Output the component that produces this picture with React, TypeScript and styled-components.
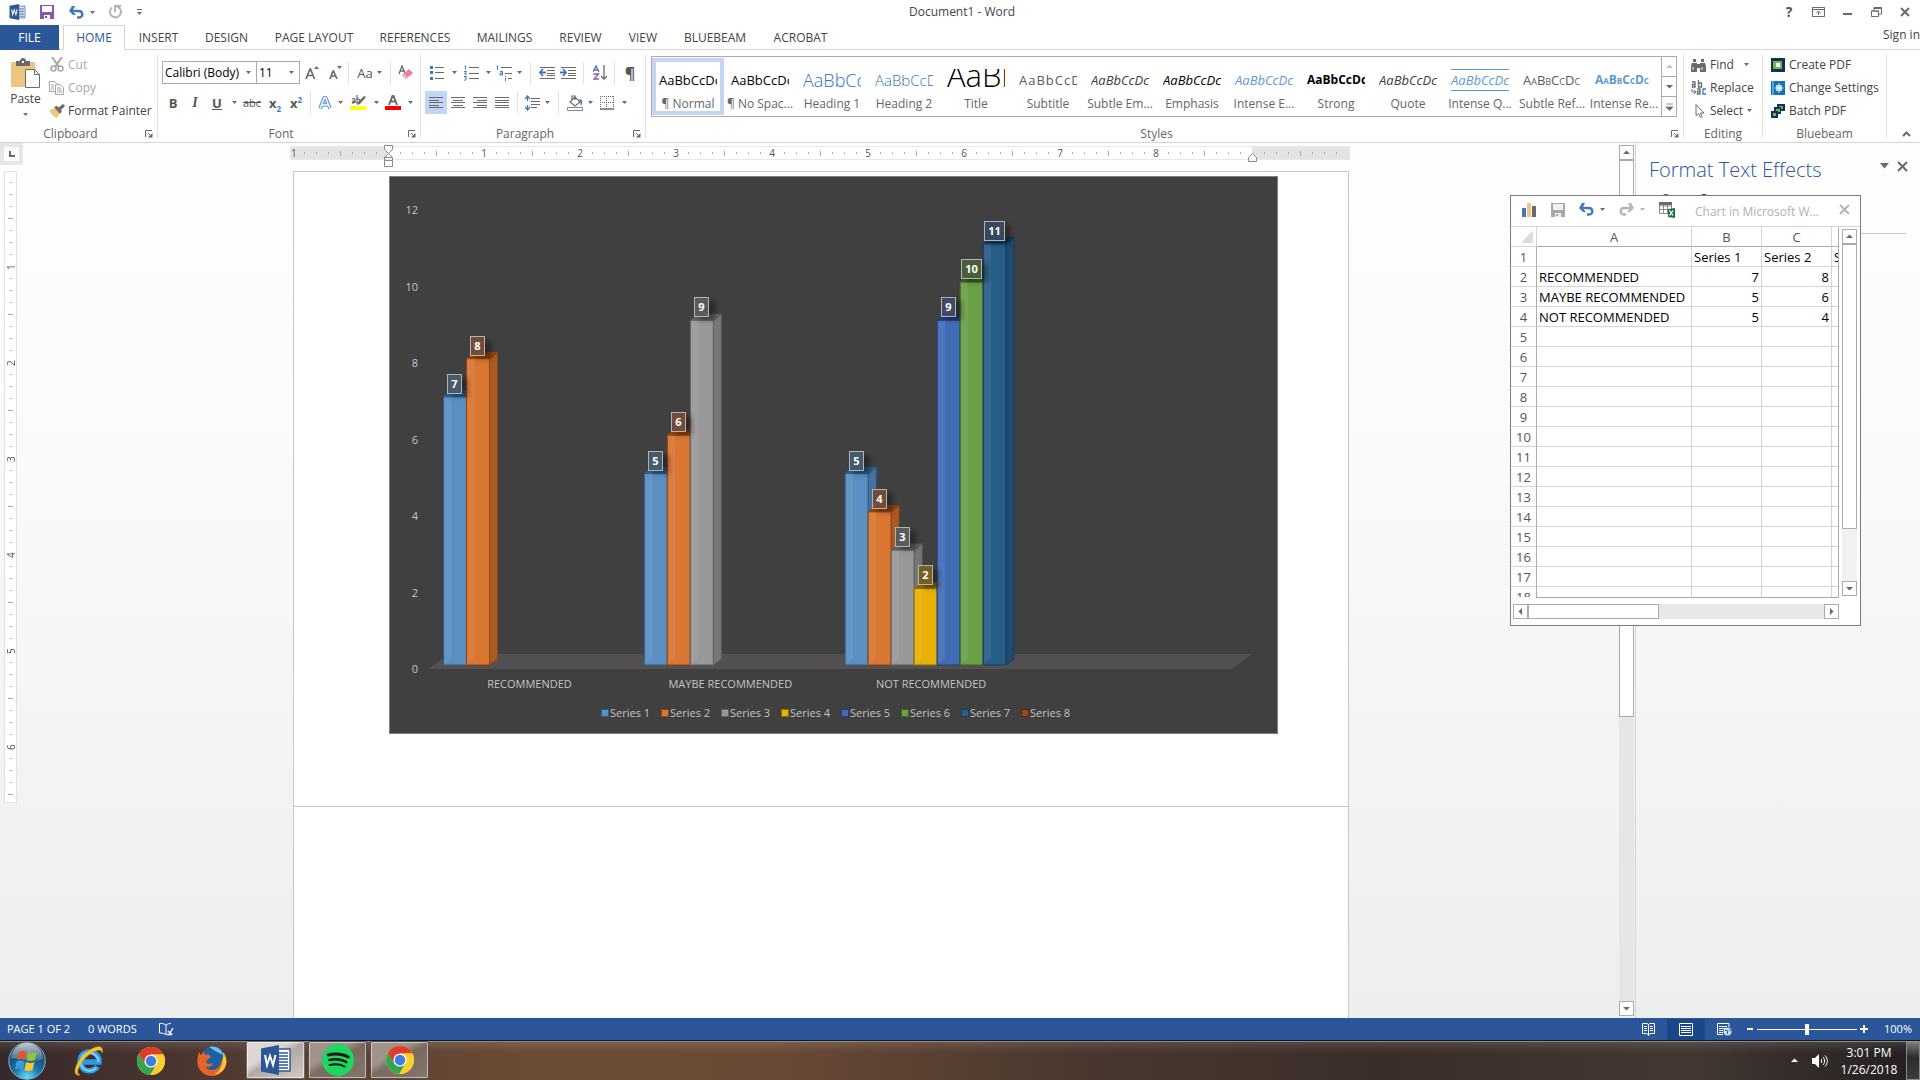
import React from "react";
import styled, { createGlobalStyle, css } from "styled-components";
import { SiSpotify } from "react-icons/si";

const ui = '"Open Sans", "Noto Sans", sans-serif';
const blue = "#2b579a";
const line = "#d4d4d4";
const ink = "#444444";

const GlobalStyle = createGlobalStyle`
  * { box-sizing: border-box; }
  html, body { margin: 0; height: 100%; overflow: hidden; background: #fff; }
  #root { height: 100%; }
  body, button, input, select { font-family: ${ui}; font-size: 12px; color: ${ink}; }
  button { margin: 0; padding: 0; border: 0; background: none; }
  svg { display: block; flex: none; }
`;

const Screen = styled.div`
  display: flex;
  flex-direction: column;
  height: 100vh;
`;

/* ---------- Title bar ---------- */

const TitleBar = styled.header`
  display: grid;
  grid-template-columns: 1fr auto 1fr;
  align-items: center;
  height: 25px;
  padding: 0 5px 1px 9px;
`;
const QuickAccess = styled.div`
  display: flex;
  align-items: center;
`;
const QuickButton = styled.button<{ $w: number }>`
  display: flex;
  align-items: center;
  width: ${(p) => p.$w}px;
  height: 20px;
`;
const WindowTitle = styled.h1`
  margin: 0;
  font-size: 12px;
  line-height: 16px;
  font-weight: 400;
`;
const WindowButtons = styled.div`
  display: flex;
  justify-content: flex-end;
  gap: 9px;
`;
const WindowButton = styled.button`
  display: grid;
  place-items: center;
  width: 20px;
  height: 20px;
`;

/* ---------- Tabs ---------- */

const TabRow = styled.nav`
  display: flex;
  height: 25px;
  border-bottom: 1px solid ${line};
`;
const Tab = styled.button<{ $w: number; $kind?: "file" | "active" }>`
  width: ${(p) => p.$w}px;
  height: 25px;
  font-size: 12px;
  line-height: 24px;
  white-space: nowrap;
  ${(p) =>
    p.$kind === "file" &&
    css`
      background: ${blue};
      color: #fff;
      margin-right: 4px;
    `}
  ${(p) =>
    p.$kind === "active" &&
    css`
      background: #fff;
      color: ${blue};
      border: 1px solid ${line};
      border-bottom: 0;
    `}
`;
const SignIn = styled.a`
  margin-left: auto;
  line-height: 20px;
  color: ${ink};
  text-decoration: none;
`;

/* ---------- Ribbon ---------- */

const Ribbon = styled.section`
  display: flex;
  height: 93px;
  border-bottom: 1px solid ${line};
`;
const Divider = styled.div`
  width: 1px;
  margin: 4px 0;
  background: #e1e1e1;
`;
const Group = styled.div<{ $w?: number }>`
  display: flex;
  flex-direction: column;
  ${(p) => (p.$w ? `width: ${p.$w}px;` : "flex: 1; min-width: 0;")}
`;
const GroupBody = styled.div`
  flex: 1;
  min-height: 0;
`;
const GroupFooter = styled.div<{ $launch: boolean }>`
  display: grid;
  grid-template-columns: ${(p) => (p.$launch ? "1fr 16px" : "1fr")};
  align-items: center;
  height: 16px;
  color: #666;
  text-align: center;
  line-height: 16px;
`;
const Launch = styled.button`
  display: grid;
  place-items: center;
`;
const Tools = styled.div`
  display: flex;
  flex-direction: column;
  gap: 7px;
  padding: 11px 0 0 4px;
`;
const ToolRow = styled.div`
  display: flex;
  align-items: center;
  height: 23px;
`;
const Tool = styled.button<{ $w: number; $on?: boolean }>`
  display: flex;
  align-items: center;
  justify-content: center;
  gap: 4px;
  width: ${(p) => p.$w}px;
  height: 23px;
  background: ${(p) => (p.$on ? "#c2d5f2" : "none")};
`;
const ToolSep = styled.i<{ $w: number }>`
  width: ${(p) => p.$w}px;
  height: 22px;
  background: linear-gradient(#e1e1e1, #e1e1e1) center / 1px 100% no-repeat;
`;
const Glyph = styled.span<{ $bold?: boolean; $italic?: boolean; $deco?: string; $size?: number }>`
  font-size: ${(p) => p.$size ?? 13}px;
  line-height: 16px;
  font-weight: ${(p) => (p.$bold ? 700 : 400)};
  font-style: ${(p) => (p.$italic ? "italic" : "normal")};
  font-family: ${(p) => (p.$italic ? '"Liberation Serif", serif' : ui)};
  text-decoration: ${(p) => p.$deco ?? "none"};
  color: #555;
  sub, sup {
    font-size: 8px;
    line-height: 0;
    color: #3f7ab8;
  }
`;
const ComboWrap = styled.label<{ $w: number }>`
  position: relative;
  width: ${(p) => p.$w}px;
  height: 23px;
  border: 1px solid #ababab;
  & + & {
    border-left: 0;
  }
`;
const Combo = styled.select`
  appearance: none;
  display: block;
  width: 100%;
  height: 21px;
  padding: 0 12px 0 2px;
  border: 0;
  border-radius: 0;
  background: #fff;
  color: #000;
`;
const ComboArrow = styled.span`
  position: absolute;
  right: 5px;
  top: 9px;
  pointer-events: none;
`;

const ClipboardBody = styled.div`
  display: flex;
  padding-top: 3px;
`;
const PasteButton = styled.button`
  display: flex;
  flex-direction: column;
  align-items: center;
  width: 49px;
  padding: 5px 0 0 2px;
  line-height: 20px;
`;
const PasteCaret = styled.span`
  padding-top: 4px;
`;
const StackedButtons = styled.div`
  display: flex;
  flex-direction: column;
`;
const LabelButton = styled.button<{ $off?: boolean }>`
  display: flex;
  align-items: center;
  gap: 4px;
  height: 23px;
  white-space: nowrap;
  color: ${(p) => (p.$off ? "#a6a6a6" : ink)};
`;
const Indented = styled.div`
  padding: 3px 0 0 7px;
`;
const IconCell = styled.span`
  display: grid;
  place-items: center;
  width: 15px;
`;

const Gallery = styled.div`
  display: flex;
  height: 61px;
  margin: 6px 6px 0 5px;
  border: 1px solid #ababab;
`;
const GalleryItems = styled.div`
  display: flex;
  flex: 1;
  min-width: 0;
  overflow: hidden;
`;
const StyleCard = styled.button<{ $on?: boolean }>`
  flex: 0 0 72px;
  height: 57px;
  margin-top: 1px;
  padding-top: 4px;
  box-shadow: ${(p) => (p.$on ? "inset 0 0 0 4px #c2d5f2" : "none")};
`;
const Preview = styled.span<{ $look: string }>`
  display: block;
  width: 58px;
  height: 26px;
  margin: 3px 7px 0;
  overflow: hidden;
  white-space: nowrap;
  text-align: left;
  font-size: 13px;
  line-height: 22px;
  color: #000;
  ${(p) => p.$look}
`;
const StyleName = styled.span`
  display: block;
  padding-top: 1px;
  line-height: 16px;
  color: #666;
  white-space: nowrap;
`;
const GalleryScroll = styled.div`
  display: flex;
  flex-direction: column;
  width: 15px;
  border-left: 1px solid #ababab;
`;
const GalleryStep = styled.button`
  flex: 1;
  display: grid;
  place-items: center;
  & + & {
    border-top: 1px solid #ababab;
  }
`;
const Collapse = styled.div`
  display: flex;
  align-items: flex-end;
  justify-content: center;
  width: 33px;
  padding: 0 0 5px 5px;
`;

/* ---------- Workspace ---------- */

const Workspace = styled.main`
  position: relative;
  display: flex;
  flex: 1;
  min-height: 0;
  background: linear-gradient(#fefefe, #fbfbfb 30%, #eeeeee);
`;
const Editor = styled.div`
  display: grid;
  grid-template-columns: 23px 1fr;
  grid-template-rows: 28px 1fr;
  flex: 1;
  min-width: 0;
  overflow: hidden;
`;
const TabStop = styled.button`
  display: grid;
  place-items: center;
  width: 23px;
  height: 22px;
  background: #fbfbfb;
  border: 4px solid #e6e6e6;
`;
const RulerTrack = styled.div`
  justify-self: center;
  position: relative;
  width: 1058px;
  height: 12px;
  margin: 4px 2px 0 0;
  background: linear-gradient(90deg, #e4e4e4 97px, #fff 97px, #fff 961px, #e4e4e4 961px);
  box-shadow: 0 0 0 1px #e8e8e8;
`;
const RulerScale = styled.div`
  display: flex;
  height: 12px;
  overflow: hidden;
`;
const RulerSlot = styled.span<{ $kind: string }>`
  flex: 0 0 12px;
  display: grid;
  place-items: center;
  font-size: 10px;
  line-height: 12px;
  color: #555;
  &:first-child {
    flex-basis: 7px;
    justify-items: start;
  }
  &::before {
    content: "";
    display: ${(p) => (p.$kind === "label" ? "none" : "block")};
    width: 1px;
    height: ${(p) => (p.$kind === "half" ? 5 : 2)}px;
    background: #aaa;
  }
`;
const Marker = styled.span<{ $x: number }>`
  position: absolute;
  left: ${(p) => p.$x}px;
  top: -2px;
`;
const SideRuler = styled.div`
  width: 13px;
  height: 632px;
  margin: 0 0 0 4px;
  padding-top: 5px;
  background: #fff;
  border: 1px solid #e1e1e1;
`;
const SideSlot = styled.span<{ $kind: string }>`
  display: grid;
  place-items: center;
  width: 12px;
  height: 12px;
  writing-mode: vertical-rl;
  transform: rotate(180deg);
  font-size: 10px;
  line-height: 10px;
  color: #555;
  &::before {
    content: "";
    display: ${(p) => (p.$kind === "label" ? "none" : "block")};
    width: ${(p) => (p.$kind === "half" ? 5 : 2)}px;
    height: 1px;
    background: #aaa;
  }
`;
const Pages = styled.div`
  justify-self: center;
  display: flex;
  flex-direction: column;
  width: 1056px;
  min-height: 0;
`;
const Sheet = styled.article<{ $fill?: boolean }>`
  background: #fff;
  border: 1px solid #c6c6c6;
  border-bottom: 0;
  padding: 4px 0 0 95px;
  ${(p) => (p.$fill ? "flex: 1;" : "padding-bottom: 72px;")}
`;

const ScrollColumn = styled.div<{ $bg?: string }>`
  display: flex;
  flex-direction: column;
  width: 15px;
  background: ${(p) => p.$bg ?? "#e6e6e6"};
`;
const ScrollRow = styled.div`
  display: flex;
  height: 15px;
  background: #e8e8e8;
`;
const ScrollButton = styled.button`
  display: grid;
  place-items: center;
  flex: 0 0 15px;
  width: 15px;
  height: 15px;
  background: #fff;
  border: 1px solid #ababab;
`;
const ScrollThumb = styled.div<{ $len: string }>`
  flex: 0 0 ${(p) => p.$len};
  background: #fff;
  border: 1px solid #ababab;
`;
const Spring = styled.div`
  flex: 1;
`;
const DocScroll = styled.div`
  display: flex;
  margin: 2px 1px 2px 0;
`;
const Pane = styled.aside`
  width: 285px;
  padding: 10px 12px 0 13px;
  border-left: 1px solid ${line};
`;
const PaneHead = styled.div`
  display: flex;
  align-items: center;
  height: 34px;
`;
const PaneTitle = styled.h2`
  flex: 1;
  margin: 0;
  font-size: 20px;
  line-height: 28px;
  font-weight: 300;
  color: ${blue};
`;
const PaneTabs = styled.div`
  height: 47px;
  display: flex;
  gap: 22px;
  padding: 7px 0 0 10px;
  margin-right: 2px;
  border-bottom: 1px solid #c6c6c6;
`;
const PaneTools = styled.div`
  display: flex;
  align-items: center;
  gap: 7px;
  padding-bottom: 8px;
`;

/* ---------- Data window ---------- */

const DataWindow = styled.section`
  position: absolute;
  right: 59px;
  top: 52px;
  width: 351px;
  background: #fff;
  border: 1px solid #7b7b7b;
`;
const DataBar = styled.div`
  display: flex;
  align-items: center;
  height: 31px;
  padding: 0 10px 3px 11px;
  border-bottom: 1px solid ${line};
`;
const DataTitle = styled.h3`
  flex: 1;
  margin: 0;
  padding: 4px 0 0 20px;
  font-size: 12px;
  font-weight: 400;
  color: #b1b1b1;
  white-space: nowrap;
`;
const DataMain = styled.div`
  display: flex;
  gap: 3px;
  height: 371px;
`;
const GridClip = styled.div`
  width: 328px;
  overflow: hidden;
  background: linear-gradient(#ababab, #ababab) 25px 100% / 303px 1px no-repeat;
  padding-bottom: 1px;
`;
const GridView = styled.div`
  height: 370px;
  overflow: hidden;
  border-right: 1px solid #ababab;
`;
const GridTable = styled.table`
  width: 397px;
  table-layout: fixed;
  border-collapse: separate;
  border-spacing: 0;
  color: #000;
  font-size: 13px;
  line-height: 18px;
  th, td {
    height: 20px;
    padding: 1px 2px 0;
    font-weight: 400;
    border-right: 1px solid ${line};
    border-bottom: 1px solid ${line};
    white-space: nowrap;
  }
  th {
    color: #555;
    text-align: center;
  }
  thead th {
    border-bottom-color: #ababab;
  }
  thead th:first-child {
    border-bottom-color: ${line};
  }
  tbody th {
    border-right-color: #ababab;
  }
`;
const Cell = styled.td<{ $num?: boolean }>`
  text-align: ${(p) => (p.$num ? "right" : "left")};
`;
const Corner = styled.i`
  display: block;
  width: 12px;
  height: 12px;
  margin-left: 8px;
  background: linear-gradient(135deg, transparent 50%, #dcdcdc 50%);
`;
const DataSide = styled.div`
  display: flex;
  padding: 2px 0 2px;
`;
const DataFoot = styled.div`
  width: 326px;
  margin: 6px 0 6px 2px;
`;

/* ---------- Status bar ---------- */

const StatusBar = styled.footer`
  display: flex;
  align-items: center;
  height: 22px;
  padding: 0 8px 0 7px;
  background: ${blue};
  color: #fff;
  font-size: 11px;
  line-height: 20px;
`;
const StatusText = styled.span<{ $w: number }>`
  width: ${(p) => p.$w}px;
`;
const ViewButton = styled.button<{ $on?: boolean }>`
  display: grid;
  place-items: center;
  width: 38px;
  height: 21px;
  background: ${(p) => (p.$on ? "#19478a" : "none")};
`;
const ZoomButton = styled.button`
  display: grid;
  place-items: center;
  width: 14px;
  height: 20px;
`;
const ZoomRange = styled.input`
  appearance: none;
  width: 100px;
  height: 11px;
  margin: 0;
  background: linear-gradient(#fff, #fff) center / 100% 1px no-repeat;
  &::-webkit-slider-thumb {
    appearance: none;
    width: 4px;
    height: 11px;
    background: #fff;
  }
`;
const ZoomValue = styled.output`
  width: 41px;
  text-align: right;
`;

/* ---------- Taskbar ---------- */

const Taskbar = styled.nav`
  display: flex;
  align-items: stretch;
  height: 40px;
  border-top: 1px solid #17181c;
  box-shadow: inset 0 1px 0 #8d8a88;
  background:
    linear-gradient(rgba(255, 255, 255, 0.12), rgba(255, 255, 255, 0) 30%),
    linear-gradient(90deg, #35292a, #553c32 14%, #6b4c35 28%, #6a4a36 40%, #4a382f 56%, #3b2e2a 72%, #433833 88%, #231f20);
`;
const Launcher = styled.button<{ $w: number }>`
  display: grid;
  place-items: center;
  width: ${(p) => p.$w}px;
`;
const TaskButton = styled.button<{ $on?: boolean }>`
  display: grid;
  place-items: center;
  width: 59px;
  height: 38px;
  margin-right: 3px;
  border: 1px solid ${(p) => (p.$on ? "#f2eeec" : "#b4a8a0")};
  border-radius: 2px;
  outline: 1px solid rgba(0, 0, 0, 0.55);
  outline-offset: -1px;
  box-shadow: inset 0 0 0 1px rgba(255, 255, 255, 0.5);
  background: ${(p) =>
    p.$on
      ? "linear-gradient(150deg, #dcd7d4 36%, #b3a8a2 50%, #d2cbc7)"
      : "linear-gradient(150deg, #a09389 36%, #7a6a5f 50%, #85756a)"};
`;
const SpotifyDisc = styled.span`
  border-radius: 50%;
  background: radial-gradient(#14171a 60%, transparent 61%);
`;
const Tray = styled.div`
  display: flex;
  align-items: center;
  margin-left: auto;
`;
const TrayButton = styled.button`
  display: grid;
  place-items: center;
  width: 25px;
  height: 30px;
`;
const Clock = styled.time`
  width: 74px;
  text-align: center;
  color: #fff;
  font-size: 12px;
  line-height: 17px;
`;
const ShowDesktop = styled.button`
  align-self: stretch;
  width: 14px;
  margin-top: 1px;
  border: 1px solid #8b8988;
  background: linear-gradient(#777, #2b2b2b 40%, #3b3b3b);
`;

/* ---------- Icons ---------- */

const g = "#6a6a6a";
const b = "#3f7ab8";

const Icon = ({ w = 16, h = 16, children }: { w?: number; h?: number; children: React.ReactNode }) => (
  <svg width={w} height={h} viewBox={`0 0 ${w} ${h}`} fill="none" aria-hidden="true">
    {children}
  </svg>
);
const Tri = ({ dir = "down", color = g }: { dir?: "up" | "down" | "left" | "right"; color?: string }) => {
  const d = { down: "M0 2h7L3.5 5.5z", up: "M0 5h7L3.5 1.5z", left: "M5 0v7L1.5 3.5z", right: "M2 0v7l3.5-3.5z" }[dir];
  return <Icon w={7} h={7}><path d={d} fill={color} /></Icon>;
};
const Small = ({ color = g }: { color?: string }) => <Icon w={5} h={3}><path d="M0 0h5L2.5 3z" fill={color} /></Icon>;
const WordMark = ({ w, h }: { w: number; h: number }) => (
  <svg width={w} height={h} viewBox="0 0 30 30" aria-hidden="true">
    <path d="M16 4h13v22H16z" fill="#fff" stroke={blue} strokeWidth="1.4" />
    <path d="M18 8h9M18 11h9M18 14h9M18 17h9M18 20h9M18 23h9" stroke={blue} strokeWidth="1.3" />
    <path d="M0 3.500L18 0v30L0 26.500z" fill={blue} />
    <path d="M4 10l2 10 3-9 3 9 2.500-10" fill="none" stroke="#fff" strokeWidth="2" />
  </svg>
);
const Floppy = ({ color, bg = "#fff" }: { color: string; bg?: string }) => (
  <Icon w={14} h={14}><path d="M0 0h14v14H0z" fill={color} /><path d="M2 1h10v6H2zM4 10h6v4H4z" fill={bg} /><path d="M5 11h2v2H5z" fill={color} /></Icon>
);
const Undo = () => (
  <Icon w={15} h={13}><path d="M2 5h7.500c5 0 5 6.500.5 6.500H8" stroke={b} strokeWidth="2.400" /><path d="M6 0H3L0 5l4 4h3L3.500 5z" fill={b} /></Icon>
);
const RedoArc = () => (
  <Icon w={14} h={14}><path d="M4 2.500A5.500 5.500 0 1 0 9 1.500" stroke="#b5b5b5" strokeWidth="2" /><path d="M13 1H7v6" stroke="#b5b5b5" strokeWidth="2" /></Icon>
);
const RedoArrow = () => (
  <Icon w={15} h={13}><path d="M13 5H5.500c-5 0-5 6.500-.5 6.500h2" stroke="#b5b5b5" strokeWidth="2.400" /><path d="M9 0h3l3 5-4 4H8l3.500-4z" fill="#b5b5b5" /></Icon>
);
const Cross = ({ size = 10, color = g }: { size?: number; color?: string }) => (
  <Icon w={size} h={size}><path d={`M1 1l${size - 2} ${size - 2}M${size - 1} 1L1 ${size - 1}`} stroke={color} strokeWidth="2" /></Icon>
);
const PasteIcon = () => (
  <Icon w={29} h={31}>
    <path d="M0 4h24v25H0z" fill="#ecc57e" /><path d="M5 3h4c0-4 6-4 6 0h4v5H5z" fill={g} /><path d="M11 3h2v2h-2z" fill="#fff" />
    <path d="M14.500 11.500h9l5 5v13h-14z" fill="#fff" stroke={g} /><path d="M23.500 11.500v5h5" stroke={g} />
  </Icon>
);
const CutIcon = () => (
  <Icon w={14} h={15}><path d="M2 0l7 10M12 0L5 10" stroke="#a6a6a6" strokeWidth="2" /><circle cx="3.500" cy="11.500" r="2.500" stroke="#a6a6a6" strokeWidth="1.500" /><circle cx="10.500" cy="11.500" r="2.500" stroke="#a6a6a6" strokeWidth="1.500" /></Icon>
);
const CopyIcon = () => (
  <Icon w={15} h={14}><path d="M.5.5h5l2 2v8h-7z" stroke="#a6a6a6" /><path d="M2 4h3M2 6h3M2 8h3" stroke="#a6a6a6" /><path d="M6.500 3.500h5l3 3v7h-8z" fill="#fff" stroke="#a6a6a6" /><path d="M8 7h4M8 9h5M8 11h5" stroke="#a6a6a6" /></Icon>
);
const BrushIcon = () => (
  <Icon w={16} h={14}><path d="M0 6l6-2 5 5-3 5c-3-1-6-4-8-8z" fill="#ecc57e" /><path d="M5 3l3-1 5 5-2 3z" fill={g} /><path d="M9 4l5-4 2 2-4 4z" fill={g} /></Icon>
);
const LaunchIcon = () => <Icon w={8} h={8}><path d="M.5 7V.500H7M3 3l3 3" stroke={g} /><path d="M7.500 3v4.500H3z" fill={g} /></Icon>;
const EraserIcon = () => (
  <Icon w={16} h={15}><path d="M1 9L4 1l3 7M2 6h4" stroke={g} strokeWidth="1.300" /><path d="M4 10l7-6 4 4-7 6z" fill="#e88296" /><path d="M4 10l2-1.500 4 4L8 14z" fill="#f3b4c0" /></Icon>
);
const TextFx = () => (
  <Icon w={14} h={14}><path d="M2 12.500L6.500 1.500h1L12 12.500M4 9h6" stroke="#5b93cf" strokeWidth="3.600" strokeLinejoin="round" /><path d="M2 12.500L6.500 1.500h1L12 12.500M4 9h6" stroke="#fff" strokeWidth="1.400" /></Icon>
);
const Highlight = () => (
  <Icon w={16} h={15}><path d="M0 11h16v4H0z" fill="#ff0" /><path d="M2 4c2-1 3 0 3 1v3M5 6c-3 0-3 2-2 2l2-1M7 0v8c4 1 4-5 0-4" stroke={g} strokeWidth="1.300" /><path d="M14 1l2 1-6 7-3 1 1-3z" fill={g} /></Icon>
);
const FontColor = () => (
  <Icon w={16} h={15}><path d="M0 11h16v4H0z" fill="#f00" /><path d="M4 10l3.500-9h1l3.500 9M5.500 6.500h5" stroke={g} strokeWidth="2" /></Icon>
);
const Grow = ({ up }: { up?: boolean }) => (
  <Icon w={14} h={14}><path d={up ? "M1 13L5 3h.5L9.500 13M2.500 9.500h5.500" : "M2 13L5 5h.5L9 13M3 10h5"} stroke={g} strokeWidth="1.700" /><path d={up ? "M9 3h5L11.500 0z" : "M9 0h5L11.500 3z"} fill={b} /></Icon>
);
const Bullets = () => <Icon w={14} h={15}><path d="M5 2.500h9M5 7.500h9M5 13.500h9" stroke={g} /><path d="M0 1h3v3H0zM0 6h3v3H0zM0 12h3v3H0z" fill={b} /></Icon>;
const Numbers = () => <Icon w={15} h={16}><path d="M5 2.500h10M5 8.500h10M5 13.500h10" stroke={g} /><path d="M.5 1h1v3.500M0 6.500h2.500L.5 9H3M0 11.500h2.500L1 13c3 0 1 3-1 2" stroke={b} /></Icon>;
const Multi = () => <Icon w={16} h={16}><path d="M5 2.500h11M9 8.500h7M12 13.500h4" stroke={g} /><path d="M.5 1h1v4M4 6.500h2.500V10M6.500 8H4v2h3M9.500 11v1M9.500 13v3" stroke={b} /></Icon>;
const Indent = ({ back }: { back?: boolean }) => (
  <Icon w={16} h={13}><path d="M1 1.500h15M8 4.500h8M8 7.500h8M8 9.500h8M1 12.500h15" stroke={g} /><path d={back ? "M7 6.500H1M4 3L1 6.500 4 10" : "M0 6.500h6M3 3l3 3.500L3 10"} stroke={b} strokeWidth="1.800" /></Icon>
);
const SortIcon = () => <Icon w={14} h={15}><path d="M0 7l3-6 3 6M1.500 5h3" stroke={b} strokeWidth="1.300" /><path d="M.5 9h5L1 14h5" stroke="#8a5ab0" strokeWidth="1.300" /><path d="M11 0v14M8 11l3 3 3-3" stroke={g} strokeWidth="1.300" /></Icon>;
const AlignIcon = ({ kind }: { kind: "l" | "c" | "r" | "j" }) => {
  const rows = kind === "j" ? [14, 14, 14, 14, 14] : [14, 10, 14, 10, 14];
  return (
    <Icon w={14} h={13}>
      {rows.map((n, i) => {
        const x = kind === "c" ? (14 - n) / 2 : kind === "r" ? 14 - n : 0;
        return <path key={i} d={`M${x} ${Math.round(i * 2.6) + 1.5}h${n}`} stroke={g} />;
      })}
    </Icon>
  );
};
const Spacing = () => <Icon w={15} h={16}><path d="M6 3.500h9M6 6.500h9M6 9.500h9M6 12.500h6" stroke={g} /><path d="M2.500 1v5M2.500 10v5M0 4l2.500-3L5 4M0 12l2.500 3L5 12" stroke={b} strokeWidth="1.300" /></Icon>;
const Bucket = () => <Icon w={16} h={16}><path d="M.5 12.500h15v3H.5z" stroke="#8a8a8a" /><path d="M3 7l5-5 5 5-5 4zM5 5V1h3v4" stroke={g} strokeWidth="1.200" /><path d="M12 4c4 0 4 3 2 7-1-3 0-4-2-7z" fill={b} /></Icon>;
const Borders = () => <Icon w={14} h={14}><path d="M.5 0v13M6.500 0v13M13.500 0v13M0 .5h14M0 6.500h14" stroke={g} strokeDasharray="1 1" /><path d="M0 13h14" stroke={g} strokeWidth="1.500" /></Icon>;
const Binoculars = () => <Icon w={15} h={14}><path d="M1 5h5v9H0V8zM9 5h5l1 3v6H9zM6 6h3v4H6zM2 1h3v3H2zM10 1h3v3h-3z" fill={g} /><path d="M2 9v3M11 9v3" stroke="#fff" /></Icon>;
const ReplaceIcon = () => <Icon w={16} h={15}><path d="M1 2h3v5H1.500V4.500H4M7.500 0v7h3V3h-3" stroke={g} strokeWidth="1.300" /><path d="M1 9v3h3M3 10l2 2-2 2" stroke={b} /><path d="M6 9h3v5H6.500v-2.500H9" stroke={g} strokeWidth="1.300" /><path d="M15 9h-3v5h3" stroke={b} strokeWidth="1.300" /></Icon>;
const Pointer = () => <Icon w={12} h={14}><path d="M3 .5v11l2.500-2 2 4 1.500-1-1.500-3.500H11z" stroke={g} /></Icon>;
const CreatePdf = () => <Icon w={14} h={14}><path d="M0 0h14v14H0z" fill="#0f3263" /><path d="M2 3h9v8H2z" fill="#72b741" /><path d="M5 5h4v4H5z" fill="#fff" /></Icon>;
const SettingsPdf = () => <Icon w={14} h={14}><path d="M0 0h14v14H0z" fill="#1273b8" /><path d="M2 0v14" stroke="#9fd0f2" /><circle cx="8" cy="7" r="3" fill="#d7ecfa" /><path d="M8 2v10M3.500 7h9M5 4l6 6M11 4l-6 6" stroke="#d7ecfa" /></Icon>;
const BatchPdf = () => <Icon w={14} h={14}><path d="M6 0h8v7H6z" fill="#0f3263" /><path d="M8 2h4v3H8z" fill="#72b741" /><path d="M3 3h7v7H3z" fill="#0f3263" /><path d="M5 5h4v3H5z" fill="#72b741" /><path d="M0 7h7v7H0z" fill="#0f3263" /><path d="M2 9h3v3H2z" fill="#72b741" /></Icon>;
const Hourglass = () => <Icon w={9} h={22}><path d="M.5.500h8v4l-4 4-4-4zM.500 12.500l4-4 4 4zM.500 12.500h8M.500 15.500h8v6h-8zM.500 12.500v3M8.500 12.500v3" fill="#fff" stroke="#8a8a8a" /></Icon>;
const RightMark = () => <Icon w={9} h={17}><path d="M.5 16.500v-4l4-4 4 4v4z" fill="#fff" stroke="#8a8a8a" /></Icon>;
const Columns = () => <Icon w={15} h={14}><path d="M0 5h4v9H0z" fill={b} /><path d="M5 0h4v14H5z" fill="#ecc57e" /><path d="M10 3h4v11h-4z" fill={g} /></Icon>;
const GridX = () => <Icon w={17} h={16}><path d="M.5.500h12v11H.500zM.5 4h12M.5 7.500h12M4.500 0v12M8.500 0v12" stroke="#8a8a8a" /><path d="M0 0h13v3H0z" fill={g} /><path d="M9 7l7-1v10l-7-1z" fill="#1e7145" /><path d="M10.500 8.500l3.500 5M14 8.500l-3.500 5" stroke="#fff" strokeWidth="1.300" /></Icon>;
const Proof = () => <Icon w={15} h={13}><path d="M7 12C5 10 3 10 .5 10V.500C3 .500 5 .500 7 2c1-1 3-1.500 5-1.500M7 2v10" stroke="#fff" /><path d="M9 8l2 2 3-5M12.500 10v1.500H8" stroke="#fff" strokeWidth="1.300" /></Icon>;
const BookView = () => <Icon w={13} h={13}><path d="M.5.500H5l1.500 1L8 .500h4.500v10H8l-1.500 2-1.500-2H.500zM6.500 1v11M2 3.500h3M2 5.500h3M2 7.500h3M8 3.500h3M8 5.500h3M8 7.500h3" stroke="#fff" /></Icon>;
const PrintView = () => <Icon w={14} h={13}><path d="M.5.500h13v12H.500zM2 3.500h10M2 5.500h10M2 7.500h10M2 9.500h10" stroke="#fff" /></Icon>;
const WebView = () => <Icon w={15} h={13}><path d="M12 4V.500H.500v11H6M2 3.500h8M2 5.500h6M2 7.500h4M2 9.500h4" stroke="#fff" /><circle cx="10.500" cy="8.500" r="4" fill="#cfe0f5" /><path d="M8 7l3 1-1 3M12 6l2 2" stroke={blue} /></Icon>;

const StartOrb = () => (
  <svg width="38" height="38" viewBox="0 0 38 38" aria-hidden="true">
    <defs>
      <radialGradient id="orb" cx="50%" cy="95%" r="90%"><stop offset="0" stopColor="#5fe0f8" /><stop offset=".4" stopColor="#1b76ab" /><stop offset="1" stopColor="#16324d" /></radialGradient>
      <linearGradient id="gloss" x1="0" y1="0" x2="0" y2="1"><stop offset="0" stopColor="#fff" stopOpacity=".75" /><stop offset="1" stopColor="#fff" stopOpacity=".15" /></linearGradient>
    </defs>
    <circle cx="19" cy="19" r="18.200" fill="url(#orb)" stroke="#8fb4cb" />
    <path d="M3 17A16 16 0 0 1 35 17C24 22 14 14 3 17z" fill="url(#gloss)" />
    <path d="M11 10c3-2 5-1.500 7.500-.5L17 18c-2.500-1.500-5-1.500-8 0z" fill="#e8532b" />
    <path d="M20 10c3 1.500 6 1.500 9-.5l-2 8.500c-3 1.500-6 1.500-8.500 0z" fill="#8fc43e" />
    <path d="M8.500 19.500c3-1.500 5.500-1.500 8 0l-1.500 8c-2.500-1.500-5-1.500-8 0z" fill="#3d9be0" />
    <path d="M18 20c3 1.500 5.500 1.500 8.500 0l-2 8c-3 1.500-5.500 1.500-8 0z" fill="#fbc72b" />
  </svg>
);
const Explorer = () => (
  <svg width="32" height="32" viewBox="0 0 32 32" aria-hidden="true">
    <path d="M24.500 21.500A9.500 9.500 0 1 1 26 17H10" fill="none" stroke="#2d9be4" strokeWidth="5.500" />
    <path d="M23 23A9 9 0 1 1 25.500 17" fill="none" stroke="#86d4fb" strokeWidth="2" />
    <path d="M7 30C-4 32 5 12 17 5c9-5.500 14-4 12 3 0-4-5-4-12 1C7 16 1 29 7 30z" fill="#f9c62b" stroke="#e0a012" strokeWidth=".6" />
  </svg>
);
const Chrome = () => (
  <svg width="28" height="28" viewBox="0 0 28 28" aria-hidden="true">
    <circle cx="14" cy="14" r="14" fill="#fbcf2f" />
    <path d="M14 7.500h12.400A14 14 0 0 0 1.900 7L8 17z" fill="#de3b2b" />
    <path d="M1.900 7A14 14 0 0 0 13 28l6.500-10.500L14 14l-5.600 3.300z" fill="#35a44f" />
    <path d="M19.800 17L14 28A14 14 0 0 0 26.400 7.500H14z" fill="#fbcf2f" />
    <circle cx="14" cy="14" r="6.600" fill="#f1f1f1" /><circle cx="14" cy="14" r="5.200" fill="#3d7de0" />
  </svg>
);
const Firefox = () => (
  <svg width="30" height="30" viewBox="0 0 30 30" aria-hidden="true">
    <circle cx="16" cy="13" r="12.500" fill="#1d5fa5" /><path d="M12 1c7-2 13 2 14 8l-6-3z" fill="#6fc3ee" />
    <path d="M27 7c5 11-1 23-12 23C5 30-2 21 1 10l1-4 2 3 3-4 1 4c3-1 5 0 6 2l-4 3c-1 2-1 4 2 4l4-1c-1 5-7 5-9 3 4 6 13 5 16-1 2-4 3-8 4-12z" fill="#e8632a" />
    <path d="M26 6c7 9 3 21-9 23 7-4 10-13 9-23z" fill="#fbc834" />
  </svg>
);
const Speaker = () => <Icon w={16} h={14}><path d="M0 4h3l4-4v14l-4-4H0z" fill="#fff" /><path d="M9 5c1 1 1 3 0 4M11 3c2 2 2 6 0 8M13 1.500c3 3 3 8 0 11" stroke="#fff" /></Icon>;

/* ---------- Chart ---------- */

const series = [
  { face: "#5a8fc2", side: "#44749f", edge: "#2b5f91", tag: "#455a6d" },
  { face: "#d87632", side: "#a95a25", edge: "#93430e", tag: "#734c38" },
  { face: "#989898", side: "#777777", edge: "#606060", tag: "#5b5b5b" },
  { face: "#e8b00a", side: "#b08a10", edge: "#8c6a04", tag: "#74601f" },
  { face: "#426cb5", side: "#33558f", edge: "#213f78", tag: "#3e4b66" },
  { face: "#6aa046", side: "#517c35", edge: "#3b6420", tag: "#4a5e3c" },
  { face: "#275d89", side: "#204a6d", edge: "#153a5c", tag: "#37495a" },
  { face: "#9a4a17", side: "#783a13", edge: "#562808", tag: "#5b3a28" },
];
const clusters = [
  { name: "RECOMMENDED", values: [7, 8] },
  { name: "MAYBE RECOMMENDED", values: [5, 6, 9] },
  { name: "NOT RECOMMENDED", values: [5, 4, 3, 2, 9, 10, 11] },
];
const ChartSvg = styled.svg`
  width: 889px;
  height: 558px;
  font-family: ${ui};
  font-size: 11px;
  fill: #c4c4c4;
`;
const BASE = 489;
const UNIT = 38.3;
const BAR = 23;

const Bar = ({ x, value, s }: { x: number; value: number; s: (typeof series)[number] }) => {
  const top = BASE - value * UNIT;
  return (
    <g stroke={s.edge} strokeLinejoin="round">
      <path d={`M${x + BAR} ${top}l8-6V${BASE - 6}l-8 6z`} fill={s.side} />
      <path d={`M${x} ${top}l8-6h${BAR}l-8 6z`} fill={s.edge} />
      <path d={`M${x} ${top}h${BAR}V${BASE}H${x}z`} fill={s.face} />
      <path d={`M${x + 1} ${top + 1}h7v${value * UNIT - 8}l-7 6z`} fill="#fff" fillOpacity=".07" stroke="none" />
    </g>
  );
};
const Tag = ({ x, value, s }: { x: number; value: number; s: (typeof series)[number] }) => {
  const top = Math.round(BASE - value * UNIT) - 23;
  const w = value > 9 ? 20 : 14;
  const cx = Math.round(x + BAR / 2) - 1;
  return (
    <g>
      <rect x={cx - w / 2 + 5} y={top + 4} width={w + 2} height={19} fill="#000" fillOpacity=".35" filter="url(#soft)" />
      <rect x={cx - w / 2 + 0.5} y={top + 0.5} width={w} height={19} fill={s.tag} stroke="#b3b3b3" />
      <text x={cx + 0.5} y={top + 14} textAnchor="middle" fontWeight="700" fill="#fff">{value}</text>
    </g>
  );
};
const Chart = () => (
  <ChartSvg viewBox="0 0 889 558" role="img" aria-label="Clustered column chart">
    <defs>
      <filter id="soft" x="-50%" y="-50%" width="200%" height="200%"><feGaussianBlur stdDeviation="2.500" /></filter>
    </defs>
    <rect x=".5" y=".5" width="888" height="557" fill="#404040" stroke="#7f7f7f" />
    <path d="M39 493l22-15h802l-20 15z" fill="#535051" />
    {[0, 2, 4, 6, 8, 10, 12].map((v) => (
      <text key={v} x="29" y={497 - v * 38.25} textAnchor="end">{v}</text>
    ))}
    {clusters.map((c, k) => {
      const left = 54.500 + k * 200.800;
      return (
        <g key={c.name}>
          {c.values.map((v, i) => <Bar key={i} x={left + i * BAR} value={v} s={series[i]} />)}
          {c.values.map((v, i) => <Tag key={i} x={left + i * BAR} value={v} s={series[i]} />)}
          <text x={140.500 + k * 200.800} y="512" textAnchor="middle">{c.name}</text>
        </g>
      );
    })}
    {series.map((s, i) => (
      <g key={i}>
        <rect x={212.500 + i * 60} y="533.500" width="7" height="7" fill={s.face} stroke={s.edge} />
        <text x={221 + i * 60} y="541">{`Series ${i + 1}`}</text>
      </g>
    ))}
  </ChartSvg>
);

/* ---------- Data ---------- */

const tabs: [string, number][] = [
  ["INSERT", 67], ["DESIGN", 69], ["PAGE LAYOUT", 106], ["REFERENCES", 96], ["MAILINGS", 83],
  ["REVIEW", 69], ["VIEW", 56], ["BLUEBEAM", 88], ["ACROBAT", 83],
];
const styleCards: [string, string, string?][] = [
  ["¶ Normal", ""],
  ["¶ No Spac...", ""],
  ["Heading 1", "font-size:18px;font-weight:300;color:#2e74b5;", "AaBbCc"],
  ["Heading 2", "font-size:15px;font-weight:300;color:#2e74b5;", "AaBbCcD"],
  ["Title", "font-size:31px;font-weight:300;line-height:12px;", "AaBb"],
  ["Subtitle", "color:#5a5a5a;letter-spacing:1px;"],
  ["Subtle Em...", "font-style:italic;color:#404040;"],
  ["Emphasis", "font-style:italic;"],
  ["Intense E...", "font-style:italic;color:#5b9bd5;"],
  ["Strong", "font-size:12px;font-weight:700;"],
  ["Quote", "font-style:italic;color:#404040;"],
  ["Intense Q...", "font-style:italic;color:#5b9bd5;height:22px;margin-bottom:4px;box-shadow:inset 0 1px #5b9bd5,inset 0 -1px #5b9bd5;"],
  ["Subtle Ref...", "font-variant:small-caps;color:#5a5a5a;"],
  ["Intense Re...", "font-size:12px;font-variant:small-caps;font-weight:700;color:#5b9bd5;"],
];
const sheetRows: (string | number)[][] = [
  ["", "Series 1", "Series 2", "Series 3"],
  ["RECOMMENDED", 7, 8, ""],
  ["MAYBE RECOMMENDED", 5, 6, 9],
  ["NOT RECOMMENDED", 5, 4, 3],
];
const slotKind = (i: number) => (i % 8 === 0 ? "label" : i % 4 === 0 ? "half" : "dot");

const Footer = ({ label, launch = true }: { label: string; launch?: boolean }) => (
  <GroupFooter $launch={launch}>
    <span>{label}</span>
    {launch && <Launch aria-label={`${label} options`}><LaunchIcon /></Launch>}
  </GroupFooter>
);

const RibbonBar = () => (
  <Ribbon>
    <Group $w={157}>
      <GroupBody>
        <ClipboardBody>
          <PasteButton><PasteIcon />Paste<PasteCaret><Small /></PasteCaret></PasteButton>
          <StackedButtons>
            <LabelButton $off><IconCell><CutIcon /></IconCell>Cut</LabelButton>
            <LabelButton $off><IconCell><CopyIcon /></IconCell>Copy</LabelButton>
            <LabelButton><IconCell><BrushIcon /></IconCell>Format Painter</LabelButton>
          </StackedButtons>
        </ClipboardBody>
      </GroupBody>
      <Footer label="Clipboard" />
    </Group>
    <Divider />
    <Group $w={262}>
      <GroupBody>
        <Tools>
          <ToolRow>
            <ComboWrap $w={95}><Combo aria-label="Font"><option>Calibri (Body)</option></Combo><ComboArrow><Small /></ComboArrow></ComboWrap>
            <ComboWrap $w={43}><Combo aria-label="Font size"><option>11</option></Combo><ComboArrow><Small /></ComboArrow></ComboWrap>
            <Tool $w={24} aria-label="Grow font"><Grow up /></Tool>
            <Tool $w={22} aria-label="Shrink font"><Grow /></Tool>
            <ToolSep $w={5} />
            <Tool $w={37}><Glyph>Aa</Glyph><Small /></Tool>
            <ToolSep $w={5} />
            <Tool $w={26} aria-label="Clear formatting"><EraserIcon /></Tool>
          </ToolRow>
          <ToolRow>
            <Tool $w={22}><Glyph $bold>B</Glyph></Tool>
            <Tool $w={22}><Glyph $bold $italic $size={14}>I</Glyph></Tool>
            <Tool $w={22}><Glyph $bold $deco="underline">U</Glyph></Tool>
            <Tool $w={12} aria-label="Underline style"><Small /></Tool>
            <Tool $w={24}><Glyph $deco="line-through" $size={11}>abc</Glyph></Tool>
            <Tool $w={22}><Glyph $bold>x<sub>2</sub></Glyph></Tool>
            <Tool $w={20}><Glyph $bold>x<sup>2</sup></Glyph></Tool>
            <ToolSep $w={8} />
            <Tool $w={22} aria-label="Text effects"><TextFx /></Tool>
            <Tool $w={8} aria-label="More text effects"><Small /></Tool>
            <Tool $w={28} aria-label="Highlight"><Highlight /></Tool>
            <Tool $w={8} aria-label="Highlight colour"><Small /></Tool>
            <Tool $w={26} aria-label="Font colour"><FontColor /></Tool>
            <Tool $w={8} aria-label="More font colours"><Small /></Tool>
          </ToolRow>
        </Tools>
      </GroupBody>
      <Footer label="Font" />
    </Group>
    <Divider />
    <Group $w={224}>
      <GroupBody>
        <Tools>
          <ToolRow>
            <Tool $w={24} aria-label="Bullets"><Bullets /></Tool>
            <Tool $w={10} aria-label="Bullet library"><Small /></Tool>
            <Tool $w={24} aria-label="Numbering"><Numbers /></Tool>
            <Tool $w={10} aria-label="Numbering library"><Small /></Tool>
            <Tool $w={22} aria-label="Multilevel list"><Multi /></Tool>
            <Tool $w={8} aria-label="List library"><Small /></Tool>
            <ToolSep $w={14} />
            <Tool $w={20} aria-label="Decrease indent"><Indent back /></Tool>
            <Tool $w={22} aria-label="Increase indent"><Indent /></Tool>
            <ToolSep $w={8} />
            <Tool $w={25} aria-label="Sort"><SortIcon /></Tool>
            <ToolSep $w={5} />
            <Tool $w={26}><Glyph $bold $size={16}>¶</Glyph></Tool>
          </ToolRow>
          <ToolRow>
            <Tool $w={22} $on aria-label="Align left"><AlignIcon kind="l" /></Tool>
            <Tool $w={22} aria-label="Center"><AlignIcon kind="c" /></Tool>
            <Tool $w={22} aria-label="Align right"><AlignIcon kind="r" /></Tool>
            <Tool $w={22} aria-label="Justify"><AlignIcon kind="j" /></Tool>
            <ToolSep $w={9} />
            <Tool $w={21} aria-label="Line spacing"><Spacing /></Tool>
            <Tool $w={9} aria-label="Spacing options"><Small /></Tool>
            <ToolSep $w={13} />
            <Tool $w={20} aria-label="Shading"><Bucket /></Tool>
            <Tool $w={10} aria-label="Shading colours"><Small /></Tool>
            <Tool $w={24} aria-label="Borders"><Borders /></Tool>
            <Tool $w={10} aria-label="Border options"><Small /></Tool>
          </ToolRow>
        </Tools>
      </GroupBody>
      <Footer label="Paragraph" />
    </Group>
    <Divider />
    <Group>
      <GroupBody>
        <Gallery>
          <GalleryItems>
            {styleCards.map(([name, look, sample], i) => (
              <StyleCard key={name} $on={i === 0}>
                <Preview $look={look}>{sample ?? "AaBbCcDc"}</Preview>
                <StyleName>{name}</StyleName>
              </StyleCard>
            ))}
          </GalleryItems>
          <GalleryScroll>
            <GalleryStep aria-label="Previous styles"><Tri dir="up" color="#c0c0c0" /></GalleryStep>
            <GalleryStep aria-label="Next styles"><Tri /></GalleryStep>
            <GalleryStep aria-label="More styles"><Icon w={7} h={8}><path d="M0 1h7M0 4h7L3.500 7.500z" stroke={g} fill={g} strokeWidth=".7" /></Icon></GalleryStep>
          </GalleryScroll>
        </Gallery>
      </GroupBody>
      <Footer label="Styles" />
    </Group>
    <Divider />
    <Group $w={78}>
      <GroupBody>
        <Indented>
          <LabelButton><IconCell><Binoculars /></IconCell>Find&nbsp;&nbsp;<Small /></LabelButton>
          <LabelButton><IconCell><ReplaceIcon /></IconCell>Replace</LabelButton>
          <LabelButton><IconCell><Pointer /></IconCell>Select<Small /></LabelButton>
        </Indented>
      </GroupBody>
      <Footer label="Editing" launch={false} />
    </Group>
    <Divider />
    <Group $w={123}>
      <GroupBody>
        <Indented>
          <LabelButton><IconCell><CreatePdf /></IconCell>Create PDF</LabelButton>
          <LabelButton><IconCell><SettingsPdf /></IconCell>Change Settings</LabelButton>
          <LabelButton><IconCell><BatchPdf /></IconCell>Batch PDF</LabelButton>
        </Indented>
      </GroupBody>
      <Footer label="Bluebeam" launch={false} />
    </Group>
    <Divider />
    <Collapse>
      <button aria-label="Collapse the ribbon"><Icon w={9} h={6}><path d="M1 5l3.500-3.500L8 5" stroke={g} strokeWidth="2" /></Icon></button>
    </Collapse>
  </Ribbon>
);

const ChartData = () => (
  <DataWindow aria-label="Chart data">
    <DataBar>
      <QuickButton $w={29} aria-label="Chart"><Columns /></QuickButton>
      <QuickButton $w={28} aria-label="Save"><Floppy color="#a9a9a9" bg="#f2eef4" /></QuickButton>
      <QuickButton $w={21} aria-label="Undo"><Undo /></QuickButton>
      <QuickButton $w={19} aria-label="Undo list"><Small /></QuickButton>
      <QuickButton $w={21} aria-label="Redo"><RedoArrow /></QuickButton>
      <QuickButton $w={19} aria-label="Redo list"><Small color="#b5b5b5" /></QuickButton>
      <QuickButton $w={16} aria-label="Edit data in Excel"><GridX /></QuickButton>
      <DataTitle>Chart in Microsoft W...</DataTitle>
      <button aria-label="Close data window"><Cross size={11} color="#b5b5b5" /></button>
    </DataBar>
    <DataMain>
      <GridClip>
        <GridView>
          <GridTable>
            <colgroup><col style={{ width: 26 }} /><col style={{ width: 155 }} /><col style={{ width: 70 }} /><col style={{ width: 70 }} /><col /></colgroup>
            <thead>
              <tr><th><Corner /></th><th>A</th><th>B</th><th>C</th><th>D</th></tr>
            </thead>
            <tbody>
              {Array.from({ length: 18 }, (_, r) => (
                <tr key={r}>
                  <th>{r + 1}</th>
                  {[0, 1, 2, 3].map((c) => {
                    const v = sheetRows[r]?.[c] ?? "";
                    return <Cell key={c} $num={typeof v === "number"}>{v}</Cell>;
                  })}
                </tr>
              ))}
            </tbody>
          </GridTable>
        </GridView>
      </GridClip>
      <DataSide>
        <ScrollColumn $bg="#f2f2f2">
          <ScrollButton aria-label="Scroll up"><Tri dir="up" /></ScrollButton>
          <ScrollThumb $len="285px" />
          <Spring />
          <ScrollButton aria-label="Scroll down"><Tri /></ScrollButton>
        </ScrollColumn>
      </DataSide>
    </DataMain>
    <DataFoot>
      <ScrollRow>
        <ScrollButton aria-label="Scroll left"><Tri dir="left" /></ScrollButton>
        <ScrollThumb $len="131px" />
        <Spring />
        <ScrollButton aria-label="Scroll right"><Tri dir="right" /></ScrollButton>
      </ScrollRow>
    </DataFoot>
  </DataWindow>
);

export default function App() {
  return (
    <Screen>
      <GlobalStyle />
      <TitleBar>
        <QuickAccess>
          <QuickButton $w={31} aria-label="Word"><WordMark w={17} h={16} /></QuickButton>
          <QuickButton $w={29} aria-label="Save"><Floppy color="#8757ac" /></QuickButton>
          <QuickButton $w={21} aria-label="Undo"><Undo /></QuickButton>
          <QuickButton $w={18} aria-label="Undo list"><Small /></QuickButton>
          <QuickButton $w={29} aria-label="Repeat"><RedoArc /></QuickButton>
          <QuickButton $w={10} aria-label="Customize"><Icon w={6} h={6}><path d="M0 .5h5" stroke={g} /><path d="M0 3h5L2.500 6z" fill={g} /></Icon></QuickButton>
        </QuickAccess>
        <WindowTitle>Document1 - Word</WindowTitle>
        <WindowButtons>
          <WindowButton aria-label="Help"><Glyph $bold $size={14}>?</Glyph></WindowButton>
          <WindowButton aria-label="Ribbon display"><Icon w={13} h={10}><path d="M.5.500h12v9H.500zM0 2.500h13M6.500 8V4.500M4.500 6l2-2 2 2" stroke={g} /></Icon></WindowButton>
          <WindowButton aria-label="Minimize"><Icon w={9} h={10}><path d="M0 7h9" stroke={g} strokeWidth="2" /></Icon></WindowButton>
          <WindowButton aria-label="Restore"><Icon w={11} h={10}><path d="M.5 4h7v5.500h-7zM0 4h8M3 3V.500h7.500V7H8M3 1.500h7.500" stroke={g} /></Icon></WindowButton>
          <WindowButton aria-label="Close"><Cross /></WindowButton>
        </WindowButtons>
      </TitleBar>
      <TabRow>
        <Tab $w={59} $kind="file">FILE</Tab>
        <Tab $w={62} $kind="active">HOME</Tab>
        {tabs.map(([name, w]) => <Tab key={name} $w={w}>{name}</Tab>)}
        <SignIn href="#signin">Sign in</SignIn>
      </TabRow>
      <RibbonBar />
      <Workspace>
        <Editor>
          <TabStop aria-label="Tab stop"><Icon w={6} h={6}><path d="M1 0v5h5" stroke={g} strokeWidth="2" /></Icon></TabStop>
          <RulerTrack>
            <RulerScale>
              {Array.from({ length: 88 }, (_, n) => n - 8).map((i) => {
                const blank = i === 0 || i === 72;
                return <RulerSlot key={i} $kind={slotKind(i)}>{i % 8 === 0 && !blank ? Math.abs(i / 8) : null}</RulerSlot>;
              })}
            </RulerScale>
            <Marker $x={93}><Hourglass /></Marker>
            <Marker $x={957}><RightMark /></Marker>
          </RulerTrack>
          <SideRuler>
            {Array.from({ length: 52 }, (_, n) => n + 1).map((i) => (
              <SideSlot key={i} $kind={slotKind(i)}>{i % 8 === 0 ? i / 8 : null}</SideSlot>
            ))}
          </SideRuler>
          <Pages>
            <Sheet><Chart /></Sheet>
            <Sheet $fill />
          </Pages>
        </Editor>
        <DocScroll>
          <ScrollColumn>
            <ScrollButton aria-label="Scroll up"><Tri dir="up" /></ScrollButton>
            <ScrollThumb $len="64%" />
            <Spring />
            <ScrollButton aria-label="Scroll down"><Tri /></ScrollButton>
          </ScrollColumn>
        </DocScroll>
        <Pane>
          <PaneHead>
            <PaneTitle>Format Text Effects</PaneTitle>
            <PaneTools>
              <button aria-label="Pane options"><Icon w={11} h={6}><path d="M1 0h9L5.500 5.500z" fill={g} /></Icon></button>
              <button aria-label="Close pane"><Cross size={11} /></button>
            </PaneTools>
          </PaneHead>
          <PaneTabs>
            <Icon w={16} h={14}><path d="M1 13L6 0h2l5 13" stroke={g} strokeWidth="2" /></Icon>
            <Icon w={16} h={14}><path d="M1 13L6 0h2l5 13" stroke={blue} strokeWidth="2" /></Icon>
          </PaneTabs>
        </Pane>
        <ChartData />
      </Workspace>
      <StatusBar>
        <StatusText $w={81}>PAGE 1 OF 2</StatusText>
        <StatusText $w={71}>0 WORDS</StatusText>
        <button aria-label="Proofing"><Proof /></button>
        <Spring />
        <ViewButton aria-label="Read mode"><BookView /></ViewButton>
        <ViewButton $on aria-label="Print layout"><PrintView /></ViewButton>
        <ViewButton aria-label="Web layout"><WebView /></ViewButton>
        <ZoomButton aria-label="Zoom out"><Icon w={6} h={2}><path d="M0 1h6" stroke="#fff" strokeWidth="2" /></Icon></ZoomButton>
        <ZoomRange type="range" aria-label="Zoom" min={0} max={200} defaultValue={100} />
        <ZoomButton aria-label="Zoom in"><Icon w={8} h={8}><path d="M0 4h8M4 0v8" stroke="#fff" strokeWidth="2" /></Icon></ZoomButton>
        <ZoomValue>100%</ZoomValue>
      </StatusBar>
      <Taskbar>
        <Launcher $w={54} aria-label="Start"><StartOrb /></Launcher>
        <Launcher $w={70} aria-label="Internet Explorer"><Explorer /></Launcher>
        <Launcher $w={54} aria-label="Chrome"><Chrome /></Launcher>
        <Launcher $w={68} aria-label="Firefox"><Firefox /></Launcher>
        <TaskButton $on aria-label="Word"><WordMark w={30} h={30} /></TaskButton>
        <TaskButton aria-label="Spotify"><SpotifyDisc><SiSpotify size={32} color="#1ed760" /></SpotifyDisc></TaskButton>
        <TaskButton aria-label="Chrome window"><Chrome /></TaskButton>
        <Tray>
          <TrayButton aria-label="Hidden icons"><Tri dir="up" color="#fff" /></TrayButton>
          <TrayButton aria-label="Volume"><Speaker /></TrayButton>
          <Clock>3:01 PM<br />1/26/2018</Clock>
          <ShowDesktop aria-label="Show desktop" />
        </Tray>
      </Taskbar>
    </Screen>
  );
}
